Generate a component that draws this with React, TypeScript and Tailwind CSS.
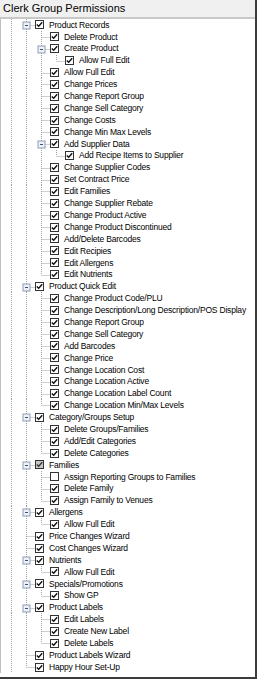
import React from 'react';

type Node = { t: string; c?: Node[]; off?: boolean; mixed?: boolean };

const tree: Node[] = [
  {
    t: 'Product Records',
    c: [
      { t: 'Delete Product' },
      { t: 'Create Product', c: [{ t: 'Allow Full Edit' }] },
      { t: 'Allow Full Edit' },
      { t: 'Change Prices' },
      { t: 'Change Report Group' },
      { t: 'Change Sell Category' },
      { t: 'Change Costs' },
      { t: 'Change Min Max Levels' },
      { t: 'Add Supplier Data', c: [{ t: 'Add Recipe Items to Supplier' }] },
      { t: 'Change Supplier Codes' },
      { t: 'Set Contract Price' },
      { t: 'Edit Families' },
      { t: 'Change Supplier Rebate' },
      { t: 'Change Product Active' },
      { t: 'Change Product Discontinued' },
      { t: 'Add/Delete Barcodes' },
      { t: 'Edit Recipies' },
      { t: 'Edit Allergens' },
      { t: 'Edit Nutrients' },
    ],
  },
  {
    t: 'Product Quick Edit',
    c: [
      { t: 'Change Product Code/PLU' },
      { t: 'Change Description/Long Description/POS Display' },
      { t: 'Change Report Group' },
      { t: 'Change Sell Category' },
      { t: 'Add Barcodes' },
      { t: 'Change Price' },
      { t: 'Change Location Cost' },
      { t: 'Change Location Active' },
      { t: 'Change Location Label Count' },
      { t: 'Change Location Min/Max Levels' },
    ],
  },
  {
    t: 'Category/Groups Setup',
    c: [{ t: 'Delete Groups/Families' }, { t: 'Add/Edit Categories' }, { t: 'Delete Categories' }],
  },
  {
    t: 'Families',
    mixed: true,
    c: [
      { t: 'Assign Reporting Groups to Families', off: true },
      { t: 'Delete Family' },
      { t: 'Assign Family to Venues' },
    ],
  },
  { t: 'Allergens', c: [{ t: 'Allow Full Edit' }] },
  { t: 'Price Changes Wizard' },
  { t: 'Cost Changes Wizard' },
  { t: 'Nutrients', c: [{ t: 'Allow Full Edit' }] },
  { t: 'Specials/Promotions', c: [{ t: 'Show GP' }] },
  {
    t: 'Product Labels',
    c: [{ t: 'Edit Labels' }, { t: 'Create New Label' }, { t: 'Delete Labels' }],
  },
  { t: 'Product Labels Wizard' },
  { t: 'Happy Hour Set-Up' },
];

type Row = {
  t: string;
  level: number;
  last: boolean;
  kids: boolean;
  cont: boolean[];
  off?: boolean;
  mixed?: boolean;
};

const flatten = (nodes: Node[], level: number, cont: boolean[], out: Row[]) => {
  nodes.forEach((n, i) => {
    const last = i === nodes.length - 1;
    out.push({ t: n.t, level, last, kids: !!n.c, cont, off: n.off, mixed: n.mixed });
    if (n.c) flatten(n.c, level + 1, [...cont, !last], out);
  });
  return out;
};

const rows = flatten(tree, 1, [], []);

const LINE = '#a0a0a0';

const Guides = ({ row }: { row: Row }) => {
  const w = 19 + 15 * row.level;
  const x = 10 + 15 * row.level + 0.5;
  return (
    <svg width={w} height="12" className="shrink-0 overflow-visible">
      <line x1="10.5" y1="0" x2="10.5" y2="12" stroke={LINE} strokeDasharray="1 1" />
      {row.cont.map((c, k) =>
        c ? (
          <line
            key={k}
            x1={10 + 15 * (k + 1) + 0.5}
            y1="0"
            x2={10 + 15 * (k + 1) + 0.5}
            y2="12"
            stroke={LINE}
            strokeDasharray="1 1"
          />
        ) : null
      )}
      <line x1={x} y1="0" x2={x} y2={row.last ? 6 : 12} stroke={LINE} strokeDasharray="1 1" />
      <line x1={x} y1="6.5" x2={w} y2="6.5" stroke={LINE} strokeDasharray="1 1" />
      {row.kids && (
        <g>
          <rect x={x - 3.5} y="3" width="7" height="7" fill="#eef2f7" stroke="#8d9db5" />
          <line x1={x - 1.5} y1="6.5" x2={x + 1.5} y2="6.5" stroke="#3d5478" />
        </g>
      )}
    </svg>
  );
};

const Check = ({ off, mixed }: { off?: boolean; mixed?: boolean }) => (
  <div
    className={
      'shrink-0 w-[9px] h-[9px] border border-[#333333] flex items-center justify-center ' +
      (mixed ? 'bg-[#c8c8c8]' : 'bg-white')
    }
  >
    {!off && (
      <svg width="7" height="7" viewBox="0 0 7 7">
        <path d="M0.8 3.4 L2.7 5.3 L6.2 1.2" fill="none" stroke={mixed ? '#3a3a3a' : '#111'} strokeWidth="1.4" />
      </svg>
    )}
  </div>
);

export default function App() {
  return (
    <div className="w-[257px] h-[679px] bg-white border-r-2 border-b-2 border-[#3c3c3c] overflow-hidden font-['Liberation_Sans',Arial,sans-serif] text-black">
      <div className="h-[19px] bg-[#f0f0f0] border-b-2 border-[#c8c8c8] pl-[3px] text-[11px] leading-[17px] whitespace-nowrap">
        Clerk Group Permissions
      </div>
      <div className="flex flex-col border-l border-[#c0c0c0]">
        {rows.map((r, i) => (
          <div key={i} className="h-[11.9px] flex items-center">
            <Guides row={r} />
            <Check off={r.off} mixed={r.mixed} />
            <span className="ml-[5px] text-[8.5px] tracking-[-0.2px] leading-none whitespace-nowrap">{r.t}</span>
          </div>
        ))}
      </div>
    </div>
  );
}
